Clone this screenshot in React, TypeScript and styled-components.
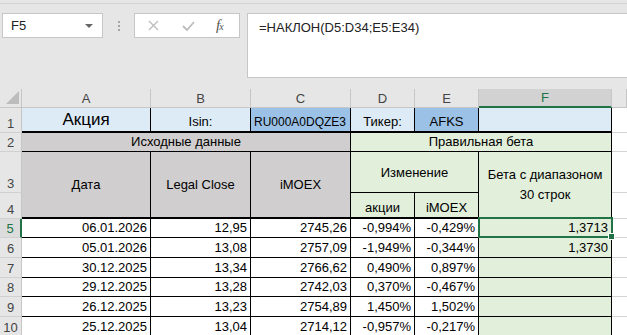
import React from "react";
import styled, { createGlobalStyle } from "styled-components";

// global
const GlobalStyle = createGlobalStyle`
  html, body {
    margin: 0;
    padding: 0;
    background: #e6e6e6;
    font-family: "Liberation Sans", Arial, sans-serif;
  }
`;

const GREEN = "#217346";

// chrome
const Window = styled.div`
  width: 627px;
  height: 335px;
  overflow: hidden;
  background: #e6e6e6;
`;

const TopStrip = styled.div`
  height: 3px;
  border-bottom: 1px solid #d4d4d4;
`;

const FormulaBar = styled.div`
  display: flex;
  align-items: flex-start;
  margin-top: 9px;
  height: 65px;
`;

const NameBox = styled.div`
  margin-left: 2px;
  width: 101px;
  height: 25px;
  box-sizing: border-box;
  border: 1px solid #c6c6c6;
  background: #fff;
  display: flex;
  align-items: center;
  justify-content: space-between;
  padding: 0 9px 0 8px;
  font-size: 13px;
  color: #222;
`;

const Grip = styled.div`
  width: 31px;
  height: 25px;
  display: flex;
  flex-direction: column;
  align-items: center;
  justify-content: center;
  gap: 2px;
`;

const GripDot = styled.span`
  width: 2px;
  height: 2px;
  background: #a6a6a6;
`;

const FxBox = styled.div`
  width: 106px;
  height: 25px;
  box-sizing: border-box;
  border: 1px solid #c6c6c6;
  background: #fff;
  display: flex;
  align-items: center;
  padding-left: 13px;
  gap: 23px;
`;

const FxLabel = styled.span`
  font-family: "Liberation Serif", "Times New Roman", serif;
  font-style: italic;
  font-size: 15px;
  color: #555;
  margin-left: -2px;
  letter-spacing: -1px;

  small {
    font-size: 10px;
    font-style: italic;
  }
`;

const FormulaInput = styled.div`
  margin-left: 7px;
  flex: 1;
  height: 65px;
  box-sizing: border-box;
  border: 1px solid #c6c6c6;
  border-right: 0;
  background: #fff;
  padding: 5px 0 0 11px;
  font-size: 13px;
  line-height: 18px;
  color: #222;
`;

// sheet
const Sheet = styled.div`
  margin-top: 11px;
  display: grid;
  grid-template-columns: 22px 129px 100px 100px 64px 64px 133px 1fr;
  grid-template-rows: 19px 25px 19px 41px 26px 19px 20px 20px 19px 20px 20px;
`;

const Corner = styled.div`
  box-sizing: border-box;
  background: #e6e6e6;
  border-right: 1px solid #c6c6c6;
  border-bottom: 1px solid #c6c6c6;
  display: flex;
  align-items: flex-end;
  justify-content: flex-end;
  padding: 0 2px 3px 0;
`;

const ColHead = styled.div<{ $active?: boolean }>`
  box-sizing: border-box;
  background: ${(p) => (p.$active ? "#d2d2d2" : "#e6e6e6")};
  color: ${(p) => (p.$active ? GREEN : "#444")};
  border-right: 1px solid #c6c6c6;
  border-bottom: ${(p) => (p.$active ? `2px solid ${GREEN}` : "1px solid #c6c6c6")};
  display: flex;
  align-items: center;
  justify-content: center;
  font-size: 13px;
`;

const RowHead = styled.div<{ $row: number; $active?: boolean }>`
  grid-column: 1;
  grid-row: ${(p) => p.$row};
  box-sizing: border-box;
  background: ${(p) => (p.$active ? "#dcdcdc" : "#e6e6e6")};
  color: ${(p) => (p.$active ? GREEN : "#444")};
  border-right: ${(p) => (p.$active ? `2px solid ${GREEN}` : "1px solid #c6c6c6")};
  border-bottom: 1px solid #d0d0d0;
  display: flex;
  align-items: flex-end;
  justify-content: center;
  padding-bottom: 1px;
  font-size: 13px;
`;

type CellProps = {
  $col: number;
  $row: number;
  $cspan?: number;
  $rspan?: number;
  $bg?: string;
  $align?: "left" | "center" | "right";
  $valign?: "end" | "center";
  $size?: number;
  $thick?: boolean;
};

const Cell = styled.div<CellProps>`
  position: relative;
  grid-column: ${(p) => p.$col} / span ${(p) => p.$cspan ?? 1};
  grid-row: ${(p) => p.$row} / span ${(p) => p.$rspan ?? 1};
  box-sizing: border-box;
  background: ${(p) => p.$bg ?? "#fff"};
  border-right: 1px solid #000;
  border-bottom: ${(p) => (p.$thick ? 2 : 1)}px solid #000;
  display: flex;
  align-items: ${(p) => (p.$valign === "center" ? "center" : "flex-end")};
  justify-content: ${(p) =>
    p.$align === "center" ? "center" : p.$align === "left" ? "flex-start" : "flex-end"};
  text-align: ${(p) => p.$align ?? "right"};
  padding: 0 3px ${(p) => (p.$valign === "center" ? 0 : 2)}px 3px;
  font-size: ${(p) => p.$size ?? 13}px;
  line-height: ${(p) => (p.$size ?? 13) + 2}px;
  color: #000;
  white-space: nowrap;
  overflow: hidden;
`;

const Wrapped = styled.span`
  white-space: normal;
  line-height: 20px;
`;

const EmptyCell = styled.div<{ $row: number }>`
  grid-column: 8;
  grid-row: ${(p) => p.$row};
  background: #fff;
  border-bottom: 1px solid #d4d4d4;
`;

const SelectedCell = styled(Cell)`
  overflow: visible;
  z-index: 2;
`;

const Selection = styled.div`
  position: absolute;
  top: -2px;
  left: -1px;
  right: -2px;
  bottom: -1px;
  border: 2px solid ${GREEN};
  pointer-events: none;
`;

const FillHandle = styled.span`
  position: absolute;
  right: -4px;
  bottom: -4px;
  width: 5px;
  height: 5px;
  background: ${GREEN};
  border: 1px solid #fff;
`;

// colours
const BLUE_LIGHT = "#ddebf7";
const BLUE = "#9bc2e6";
const GREY = "#d0cece";
const MINT = "#e2efda";

type Row = [string, string, string, string, string, string];

const rows: Row[] = [
  ["06.01.2026", "12,95", "2745,26", "-0,994%", "-0,429%", "1,3713"],
  ["05.01.2026", "13,08", "2757,09", "-1,949%", "-0,344%", "1,3730"],
  ["30.12.2025", "13,34", "2766,62", "0,490%", "0,897%", ""],
  ["29.12.2025", "13,28", "2742,03", "0,370%", "-0,467%", ""],
  ["26.12.2025", "13,23", "2754,89", "1,450%", "1,502%", ""],
  ["25.12.2025", "13,04", "2714,12", "-0,957%", "-0,217%", ""],
];

const columns = ["A", "B", "C", "D", "E", "F"];

export default function App() {
  return (
    <Window>
      <GlobalStyle />
      <TopStrip />
      <FormulaBar>
        <NameBox>
          <span>F5</span>
          <svg width="8" height="4" viewBox="0 0 8 4">
            <polygon points="0,0 8,0 4,4" fill="#666" />
          </svg>
        </NameBox>
        <Grip>
          <GripDot />
          <GripDot />
          <GripDot />
        </Grip>
        <FxBox>
          <svg width="11" height="11" viewBox="0 0 11 11">
            <path d="M1 1 L10 10 M10 1 L1 10" stroke="#bdbdbd" strokeWidth="1.4" />
          </svg>
          <svg width="13" height="10" viewBox="0 0 13 10">
            <path d="M1 5 L5 9 L12 1" stroke="#bdbdbd" strokeWidth="1.8" fill="none" />
          </svg>
          <FxLabel>
            f<small>x</small>
          </FxLabel>
        </FxBox>
        <FormulaInput>=НАКЛОН(D5:D34;E5:E34)</FormulaInput>
      </FormulaBar>

      <Sheet>
        <Corner>
          <svg width="13" height="13" viewBox="0 0 13 13">
            <polygon points="13,0 13,13 0,13" fill="#bcbcbc" />
          </svg>
        </Corner>
        {columns.map((c) => (
          <ColHead key={c} $active={c === "F"}>
            {c}
          </ColHead>
        ))}
        <ColHead />

        {/* row headers */}
        {Array.from({ length: 10 }, (_, i) => (
          <RowHead key={i} $row={i + 2} $active={i === 4}>
            {i + 1}
          </RowHead>
        ))}

        {/* row 1 */}
        <Cell $col={2} $row={2} $bg={BLUE_LIGHT} $align="center" $size={17} $thick>
          Акция
        </Cell>
        <Cell $col={3} $row={2} $bg={BLUE_LIGHT} $align="center" $thick>
          Isin:
        </Cell>
        <Cell $col={4} $row={2} $bg={BLUE} $align="left" $size={12} $thick>
          RU000A0DQZE3
        </Cell>
        <Cell $col={5} $row={2} $bg={BLUE_LIGHT} $align="center" $thick>
          Тикер:
        </Cell>
        <Cell $col={6} $row={2} $bg={BLUE} $align="center" $thick>
          AFKS
        </Cell>
        <Cell $col={7} $row={2} $bg={BLUE_LIGHT} $thick />
        <EmptyCell $row={2} />

        {/* row 2 */}
        <Cell $col={2} $row={3} $cspan={3} $bg={GREY} $align="center">
          Исходные данные
        </Cell>
        <Cell $col={5} $row={3} $cspan={3} $bg={MINT} $align="center">
          Правильная бета
        </Cell>
        <EmptyCell $row={3} />

        {/* rows 3-4 */}
        <Cell $col={2} $row={4} $rspan={2} $bg={GREY} $align="center" $valign="center" $thick>
          Дата
        </Cell>
        <Cell $col={3} $row={4} $rspan={2} $bg={GREY} $align="center" $valign="center" $thick>
          Legal Close
        </Cell>
        <Cell $col={4} $row={4} $rspan={2} $bg={GREY} $align="center" $valign="center" $thick>
          iMOEX
        </Cell>
        <Cell $col={5} $row={4} $cspan={2} $bg={MINT} $align="center" $valign="center">
          Изменение
        </Cell>
        <Cell $col={7} $row={4} $rspan={2} $bg={MINT} $align="center" $valign="center" $thick>
          <Wrapped>
            Бета с диапазоном
            <br />
            30 строк
          </Wrapped>
        </Cell>
        <EmptyCell $row={4} />
        <Cell $col={5} $row={5} $bg={MINT} $align="center" $thick>
          акции
        </Cell>
        <Cell $col={6} $row={5} $bg={MINT} $align="center" $thick>
          iMOEX
        </Cell>
        <EmptyCell $row={5} />

        {/* data */}
        {rows.map((r, i) => {
          const row = i + 6;
          return (
            <React.Fragment key={row}>
              {r.slice(0, 5).map((v, j) => (
                <Cell key={j} $col={j + 2} $row={row}>
                  {v}
                </Cell>
              ))}
              {i === 0 ? (
                <SelectedCell $col={7} $row={row} $bg={MINT}>
                  {r[5]}
                  <Selection>
                    <FillHandle />
                  </Selection>
                </SelectedCell>
              ) : (
                <Cell $col={7} $row={row} $bg={MINT}>
                  {r[5]}
                </Cell>
              )}
              <EmptyCell $row={row} />
            </React.Fragment>
          );
        })}
      </Sheet>
    </Window>
  );
}
